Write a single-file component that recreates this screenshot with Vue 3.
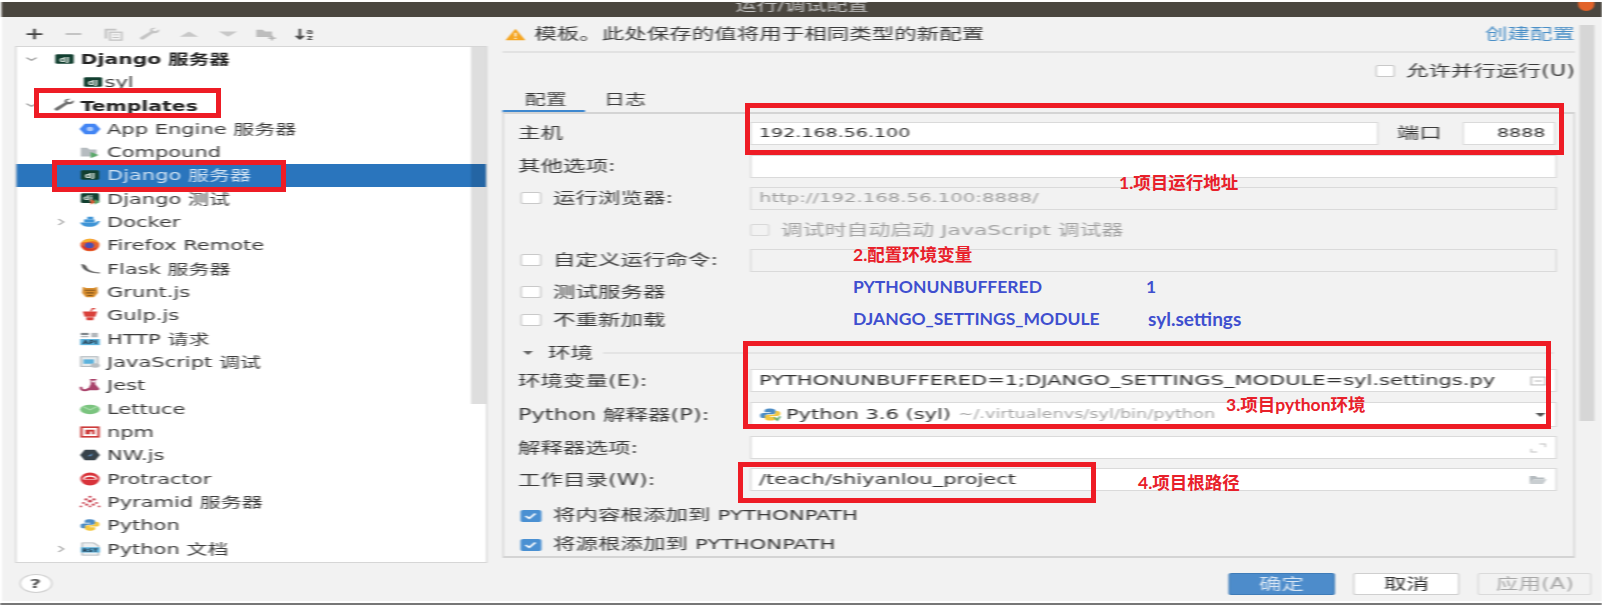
<script setup>
const dj = '<rect x="1" y="2.5" width="14" height="11" rx="1.5" fill="#123f30"/><text x="8" y="11" font-size="7.5" font-weight="700" fill="#e8f0ea" text-anchor="middle" font-family="DejaVu Sans">dj</text>'
const py = '<path d="M8 1.5c-3 0-4 1-4 2.500v1.500h4.200v.8H3C1.500 6.300.8 7.300.8 9s.8 2.800 2.200 2.800h1.300V10c0-1.400 1-2.300 2.300-2.300h3.200c1.200 0 2-.8 2-2V4C11.800 2.500 10.500 1.500 8 1.500z" fill="#4b8bc4"/><path d="M8 14.500c3 0 4-1 4-2.500v-1.500H7.800v-.8H13c1.500 0 2.200-1 2.200-2.700S14.400 4.200 13 4.200h-1.300V6c0 1.400-1 2.300-2.300 2.300H6.200c-1.200 0-2 .8-2 2V12c0 1.500 1.300 2.500 3.800 2.500z" fill="#f4c63d"/>'
const icons = {
  dj,
  djtest: '<rect x="1" y="1.500" width="14" height="11" rx="1.500" fill="#123f30"/><text x="6.500" y="9.500" font-size="7" font-weight="700" fill="#e8f0ea" text-anchor="middle" font-family="DejaVu Sans">dj</text><path d="M8.500 8l4 3.200-4 3.300z" fill="#e0562f"/><path d="M11.500 8l4 3.200-4 3.300z" fill="#59a869"/>',
  wrench: '<path d="M15 2.500l-2.800 2.300-1.900-.6-.4-1.700L12.600 1C10.500.2 8.300 1.300 8 3.300c-.1.700 0 1.300.2 1.800L1 11.500c-.8.700-.8 1.800 0 2.500.7.700 1.700.6 2.300 0l6.900-6.900c2.700.7 5.400-1.300 4.800-4.600z" fill="#6f6f6f"/>',
  appengine: '<path d="M4 2h8l4 6-4 6H4L0 8z" fill="#4285f4"/><circle cx="8" cy="8" r="2.500" fill="#a9c7fa"/>',
  compound: '<path d="M1 3h5l1.500 2H13v8H1z" fill="#b6bcc0"/><path d="M8.500 8l6 3.500-6 3.500z" fill="#59a869"/>',
  docker: '<path d="M.5 8.500h12c.8-1.500 2-1.800 3-1.500-1 3.500-3.500 6.500-8 6.500-3.500 0-6.200-1.800-7-5z" fill="#3e94d6"/><rect x="3.500" y="5" width="8" height="3.500" fill="#3e94d6"/><rect x="6" y="2" width="4.500" height="3" fill="#3e94d6"/>',
  firefox: '<circle cx="8" cy="8" r="7.200" fill="#e8612c"/><path d="M2 5c1-3 4-4.500 7-4 3 .6 5 3 6 6-1-2-2.500-3-5-3.300z" fill="#f7b32b"/><circle cx="7.500" cy="8.500" r="3.500" fill="#4a4fb5"/><path d="M1 8c1 4 4 6.500 8 6 3-.4 5-2.500 5.800-5-2 3-6 4-8.800 2.500C4 10.500 3 9 1 8z" fill="#d8352a"/>',
  flask: '<path d="M2 4c.5 5 5 8.500 13.500 8.500C10 12 6 9 5.500 6.500 5 4 3 2.500 1.500 3z" fill="#555" stroke="#666" stroke-width=".6"/>',
  grunt: '<path d="M2.500 2l2.500 1.500h6L13.500 2l.5 7-3 5H5L2 9z" fill="#d88e2f"/><path d="M4 6h8M5 9h6M6 12h4" stroke="#8a5a1c" stroke-width="1.300"/>',
  gulp: '<path d="M2.500 4h11L12 10H4z" fill="#d9403a"/><path d="M5 10.500h6l-.5 3.500h-5z" fill="#d9403a"/><path d="M8.500 4l1.500-3.500L12 1" stroke="#d9403a" stroke-width="1.200" fill="none"/>',
  http: '<rect x="1" y="1" width="6" height="2.500" fill="#7f868b"/><rect x="9" y="1" width="5" height="5" fill="#b2b7bb"/><rect x="1" y="4.500" width="6" height="1.500" fill="#b2b7bb"/><rect x=".5" y="8" width="15" height="7" fill="#5cb2dc"/><text x="8" y="14" font-size="6" font-weight="700" fill="#234" text-anchor="middle" font-family="DejaVu Sans">API</text>',
  js: '<rect x="1" y="2" width="13" height="11" fill="#e6eaec" stroke="#a9b0b5"/><rect x="3" y="5" width="8" height="5" fill="#5cb2dc"/><ellipse cx="12" cy="12" rx="3.500" ry="2.500" fill="#b9bec2"/>',
  jest: '<path d="M8 1h5v1.500h-1V7l3 5c.3 1-.3 2-1.300 2H6l2.500-7V2.500H8z" fill="#a9436b"/><path d="M1 10c0 2.500 1 4 3 4s3-1 3-2.500" fill="none" stroke="#a9436b" stroke-width="2.200"/><rect x="9.500" y="3" width="2" height="2" fill="#fff"/>',
  lettuce: '<ellipse cx="8" cy="8.500" rx="7.500" ry="5.500" fill="#7bc47f"/><path d="M3 5.500l5 3.500 5-3.500" fill="none" stroke="#a8dcaa" stroke-width="1.300"/>',
  npm: '<rect x="1.500" y="2.500" width="13" height="11" fill="#fff" stroke="#cb3837" stroke-width="1.800"/><path d="M4.500 5.500h7v5H9.500V7.500H8v3H4.500z" fill="#cb3837"/>',
  nw: '<path d="M4 2h8l3.500 6L12 14H4L.5 8z" fill="#37424a"/><path d="M6 9.500L10 6l-1 3.500z" fill="#5d8fc4"/>',
  protractor: '<circle cx="8" cy="8" r="7.300" fill="#d8333a"/><path d="M2.500 8.500h11C13.300 5.500 11 4 8 4s-5.300 1.500-5.500 4.500z" fill="#fff"/><path d="M4 8c.2-1.800 2-2.700 4-2.700s3.800.9 4 2.700z" fill="#d8333a"/>',
  pyramid: '<g fill="#c9414f"><circle cx="8" cy="2" r="1.200"/><circle cx="5" cy="5" r="1.300"/><circle cx="11" cy="5" r="1.300"/><circle cx="8" cy="7" r="1.500"/><circle cx="3" cy="9" r="1.100"/><circle cx="13" cy="9" r="1.100"/><circle cx="1" cy="13" r="1"/><circle cx="15" cy="13" r="1"/><circle cx="5.500" cy="11" r="1.200"/><circle cx="10.500" cy="11" r="1.200"/><circle cx="8" cy="13" r="1"/></g>',
  python: py,
  rst: '<path d="M2 1h9l3.500 3.500V15H2z" fill="#eceff1" stroke="#a9b0b5"/><rect x="1" y="6" width="14.500" height="6" fill="#5cb2dc"/><text x="8" y="11" font-size="5.500" font-weight="700" fill="#234" text-anchor="middle" font-family="DejaVu Sans">RST</text>',
}
const rows = [
  { label: 'Django 服务器', icon: 'dj', level: 'l0', arrow: 'down', bold: true },
  { label: 'syl', icon: 'dj', level: 'ls' },
  { label: 'Templates', icon: 'wrench', level: 'l0', arrow: 'down', bold: true },
  { label: 'App Engine 服务器', icon: 'appengine', level: 'l1' },
  { label: 'Compound', icon: 'compound', level: 'l1' },
  { label: 'Django 服务器', icon: 'dj', level: 'l1', selected: true },
  { label: 'Django 测试', icon: 'djtest', level: 'l1' },
  { label: 'Docker', icon: 'docker', level: 'l1', arrow: 'right' },
  { label: 'Firefox Remote', icon: 'firefox', level: 'l1' },
  { label: 'Flask 服务器', icon: 'flask', level: 'l1' },
  { label: 'Grunt.js', icon: 'grunt', level: 'l1' },
  { label: 'Gulp.js', icon: 'gulp', level: 'l1' },
  { label: 'HTTP 请求', icon: 'http', level: 'l1' },
  { label: 'JavaScript 调试', icon: 'js', level: 'l1' },
  { label: 'Jest', icon: 'jest', level: 'l1' },
  { label: 'Lettuce', icon: 'lettuce', level: 'l1' },
  { label: 'npm', icon: 'npm', level: 'l1' },
  { label: 'NW.js', icon: 'nw', level: 'l1' },
  { label: 'Protractor', icon: 'protractor', level: 'l1' },
  { label: 'Pyramid 服务器', icon: 'pyramid', level: 'l1' },
  { label: 'Python', icon: 'python', level: 'l1' },
  { label: 'Python 文档', icon: 'rst', level: 'l1', arrow: 'right' },
]
const pyIcon = py + '<path d="M11 11l2 3 2-4" fill="none" stroke="#59a869" stroke-width="1.400"/>'
</script>

<template>
  <div class="page">
    <div class="shot">
      <div class="title"><span>运行/调试配置</span><i class="close"></i></div>
      <div class="main">
        <div class="left">
          <div class="toolbar">
            <svg viewBox="0 0 16 16"><path d="M8 2v12M2 8h12" stroke="#444" stroke-width="2"/></svg>
            <svg viewBox="0 0 16 16"><path d="M2 8h12" stroke="#bdbdbd" stroke-width="2"/></svg>
            <svg viewBox="0 0 16 16"><path d="M2 2h9v2H4v9H2z" fill="#c4c4c4"/><rect x="6" y="6" width="9" height="9" fill="none" stroke="#c4c4c4" stroke-width="1.500"/><path d="M8 9h5M8 12h5" stroke="#c4c4c4"/></svg>
            <svg viewBox="0 0 16 16"><path d="M15 2.500l-2.800 2.300-1.900-.6-.4-1.700L12.600 1C10.500.2 8.300 1.300 8 3.300c-.1.700 0 1.300.2 1.800L1 11.500c-.8.700-.8 1.800 0 2.500.7.700 1.700.6 2.300 0l6.900-6.900c2.700.7 5.400-1.300 4.800-4.600z" fill="#c4c4c4"/></svg>
            <svg viewBox="0 0 16 16"><path d="M1 11l7-6 7 6z" fill="#c8c8c8"/></svg>
            <svg viewBox="0 0 16 16"><path d="M1 5l7 6 7-6z" fill="#c8c8c8"/></svg>
            <svg viewBox="0 0 16 16"><path d="M1 3h5l1.500 2H13v6.500H1z" fill="#bdbdbd"/><path d="M13 10v5.500M10 12.800h6" stroke="#b0b0b0" stroke-width="1.400"/></svg>
            <svg viewBox="0 0 16 16"><path d="M4.500 2v11M1.500 10l3 3.500 3-3.500" fill="none" stroke="#444" stroke-width="1.800"/><text x="12" y="7.500" font-size="8" font-weight="700" fill="#555" text-anchor="middle" font-family="DejaVu Sans">a</text><text x="12" y="15" font-size="8" font-weight="700" fill="#555" text-anchor="middle" font-family="DejaVu Sans">z</text></svg>
          </div>
          <div class="tree">
            <div v-for="(r, i) in rows" :key="i" class="row" :class="[r.level, { selected: r.selected, bold: r.bold }]">
              <span class="arrow">
                <svg v-if="r.arrow === 'down'" viewBox="0 0 12 12"><path d="M1 4l5 4 5-4" fill="none" stroke="#888" stroke-width="1.300"/></svg>
                <svg v-else-if="r.arrow === 'right'" viewBox="0 0 12 12"><path d="M3 1.500l5 4.500-5 4.500" fill="none" stroke="#888" stroke-width="1.300"/></svg>
              </span>
              <span class="ico"><svg viewBox="0 0 16 16" v-html="icons[r.icon]"></svg></span>
              <span class="lbl">{{ r.label }}</span>
            </div>
            <i class="treebar"></i>
          </div>
        </div>
        <div class="right">
          <div class="warn">
            <svg class="warnico" viewBox="0 0 16 14"><path d="M8 0l8 14H0z" fill="#f5a623"/><path d="M8 5v4.500M8 11v1.500" stroke="#fff" stroke-width="1.400"/></svg>
            <span class="warntext">模板。此处保存的值将用于相同类型的新配置</span>
            <span class="link">创建配置</span>
          </div>
          <div class="parallel"><i class="cb"></i><span>允许并行运行(U)</span></div>
          <div class="tabs">
            <span class="tab active">配置</span>
            <span class="tab">日志</span>
          </div>
          <div class="panel">
            <div class="frow r33">
              <label class="fl">主机</label>
              <div class="inp host num">192.168.56.100</div>
              <label class="portl">端口</label>
              <div class="inp port num">8888</div>
            </div>
            <div class="frow r33"><label class="fl">其他选项:</label><div class="inp grow"></div></div>
            <div class="frow r31">
              <label class="fl ck"><i class="cb"></i>运行浏览器:</label>
              <div class="inp grow off url">http://192.168.56.100:8888/</div>
            </div>
            <div class="frow r32">
              <span class="fl"></span>
              <span class="dbg"><i class="cb faint"></i>调试时自动启动 JavaScript 调试器</span>
            </div>
            <div class="frow r29">
              <label class="fl ck"><i class="cb"></i>自定义运行命令:</label>
              <div class="inp grow off"></div>
            </div>
            <div class="frow r34"><label class="fl ck"><i class="cb"></i>测试服务器</label></div>
            <div class="frow r22"><label class="fl ck"><i class="cb"></i>不重新加载</label></div>
            <div class="frow section">
              <svg class="tri" viewBox="0 0 12 8"><path d="M1 1h10L6 7z" fill="#666"/></svg>
              <span>环境</span><i class="secline"></i>
            </div>
            <div class="frow r28">
              <label class="fl">环境变量(E):</label>
              <div class="inp grow iconed">
                <span class="val">PYTHONUNBUFFERED=1;DJANGO_SETTINGS_MODULE=syl.settings.py</span>
                <svg class="tail" viewBox="0 0 14 14"><rect x="1" y="2" width="12" height="10" fill="none" stroke="#bbb" stroke-width="1.300"/><path d="M4 7h6" stroke="#bbb" stroke-width="1.300"/></svg>
              </div>
            </div>
            <div class="frow r38 interp">
              <label class="fl">Python 解释器(P):</label>
              <div class="inp grow iconed tall">
                <svg class="pyico" viewBox="0 0 16 16" v-html="pyIcon"></svg>
                <span class="pyname">Python 3.6 (syl)</span>
                <span class="pypath">~/.virtualenvs/syl/bin/python</span>
                <svg class="tail caret" viewBox="0 0 12 8"><path d="M1 1h10L6 7z" fill="#555"/></svg>
              </div>
            </div>
            <div class="frow r30">
              <label class="fl">解释器选项:</label>
              <div class="inp grow iconed">
                <svg class="tail" viewBox="0 0 14 14"><path d="M8 2h5v4M6 12H1V8" fill="none" stroke="#c4c4c4" stroke-width="1.200"/></svg>
              </div>
            </div>
            <div class="frow r34">
              <label class="fl">工作目录(W):</label>
              <div class="inp grow iconed">
                <span class="val">/teach/shiyanlou_project</span>
                <svg class="tail folder" viewBox="0 0 16 12"><path d="M1 1h5l1 2h6v2H4L1 11z" fill="#b5bbbf"/><path d="M4 5h11l-3 6H1z" fill="#c9ced1"/></svg>
              </div>
            </div>
            <div class="frow r38"><label class="ck wide"><i class="cb on"><svg viewBox="0 0 14 12"><path d="M3 6l3 3 5-6" fill="none" stroke="#fff" stroke-width="1.800"/></svg></i><span>将内容根添加到 <span class="lat">PYTHONPATH</span></span></label></div>
            <div class="frow r20"><label class="ck wide"><i class="cb on"><svg viewBox="0 0 14 12"><path d="M3 6l3 3 5-6" fill="none" stroke="#fff" stroke-width="1.800"/></svg></i><span>将源根添加到 <span class="lat">PYTHONPATH</span></span></label></div>
          </div>
        </div>
        <i class="outerbar"></i>
      </div>
      <div class="footer">
        <span class="help">?</span>
        <div class="btns">
          <button class="btn primary">确定</button>
          <button class="btn">取消</button>
          <button class="btn dis">应用(A)</button>
        </div>
      </div>
    </div>

    <div class="notes">
      <i class="box b1"></i><i class="box b2"></i><i class="box b3"></i><i class="box b4"></i><i class="box b5"></i>
      <span class="note red n1">1.项目运行地址</span>
      <span class="note red n2">2.配置环境变量</span>
      <span class="note blue n3">PYTHONUNBUFFERED</span>
      <span class="note blue n4">1</span>
      <span class="note blue n5">DJANGO_SETTINGS_MODULE</span>
      <span class="note blue n6">syl.settings</span>
      <span class="note red n7">3.项目python环境</span>
      <span class="note red n8">4.项目根路径</span>
    </div>
  </div>
</template>

<style>
html, body { margin: 0; background: #fff; overflow: hidden; }
</style>

<style scoped>
.page { position: relative; width: 1602px; height: 605px; overflow: hidden; }
/* The reference is a screenshot stretched sideways by 1.5, so the dialog is laid out at 1068px and scaled. */
.shot {
  width: 1068px; height: 605px; box-sizing: border-box;
  padding: 2px 0 2px 1.33px;
  display: flex; flex-direction: column;
  transform: scaleX(1.5); transform-origin: 0 0;
  filter: blur(0.55px);
  background: linear-gradient(#f2f2f2, #f2f2f2) content-box;
  border-bottom: 2px solid #777;
  font: 14px/1.2 "DejaVu Sans", "Noto Sans CJK SC", sans-serif;
  color: #3c3c3c;
}
.title {
  height: 15px; flex: none; background: #4a463f; color: #c4c4c4; position: relative;
  display: flex; justify-content: center; overflow: hidden; line-height: 7px;
}
.close { position: absolute; right: 5.5px; top: -5px; width: 11px; height: 14px; border-radius: 50%; background: #e2632a; }
.main { height: 546px; flex: none; display: flex; position: relative; }
.left { width: 314.67px; margin-left: 8.67px; flex: none; display: flex; flex-direction: column; }
.toolbar { height: 29px; box-sizing: border-box; padding-top: 5px; flex: none; display: flex; align-items: center; padding-left: 6.5px; gap: 11.67px; }
.toolbar svg { width: 14px; height: 14px; flex: none; }
.tree { position: relative; height: 517px; flex: none; background: #fff; border: 1px solid #d6d6d6; box-sizing: border-box; }
.row { height: 23.33px; display: flex; align-items: center; white-space: nowrap; }
.lbl { padding-top: 1px; }
.row.bold { font-weight: 700; color: #222; font-size: 13.6px; }
.row.selected { background: #2a75bd; color: #cfe2f3; }
.arrow { flex: none; display: flex; align-items: center; }
.arrow svg { width: 8px; height: 12px; }
.ico { flex: none; display: flex; align-items: center; }
.ico svg { width: 14px; height: 14px; }
.l0 { padding-left: 6px; }
.l0 .arrow { width: 19.33px; }
.l0 .ico { width: 17.33px; }
.ls { padding-left: 44px; }
.ls .arrow { width: 0; }
.ls .ico { width: 14.67px; }
.l1 { padding-left: 26px; }
.l1 .arrow { width: 16px; }
.l1 .ico { width: 18.33px; }
.treebar { position: absolute; right: 0; top: 0; width: 10px; height: 357px; background: rgba(0,0,0,.13); }
.right { width: 714.67px; margin-left: 10.67px; flex: none; display: flex; flex-direction: column; }
.warn { height: 36px; box-sizing: border-box; flex: none; display: flex; align-items: center; border-bottom: 2px solid #e2e2e2; font-size: 15px; }
.warnico { width: 13.33px; height: 13px; margin-left: 1.5px; flex: none; }
.warntext { margin-left: 6px; }
.link { margin-left: auto; color: #4a8fc7; }
.parallel { height: 36px; flex: none; display: flex; align-items: center; justify-content: flex-end; gap: 7px; font-size: 15px; }
.tabs { height: 24px; flex: none; display: flex; align-items: center; }
.tab { height: 100%; box-sizing: border-box; padding: 0 12.17px 0 14.5px; display: flex; align-items: center; border-bottom: 3px solid transparent; }
.tab + .tab { padding-left: 12.67px; }
.tab.active { border-bottom-color: #3f88cf; }
.panel { flex: none; height: 446px; box-sizing: border-box; border: 1px solid #d4d4d4; border-width: 2px 1.33px; padding: 2.5px 11px 0 9px; margin-top: -1px; font-size: 15px; }
.frow { display: flex; align-items: center; white-space: nowrap; }
.r20 { height: 20px; } .r22 { height: 22px; } .r28 { height: 28px; } .r29 { height: 29px; }
.r30 { height: 30px; } .r31 { height: 31px; } .r32 { height: 32px; } .r33 { height: 33px; }
.r34 { height: 34px; } .r38 { height: 38px; }
.interp { padding-top: 2px; box-sizing: border-box; }
.fl { width: 154.67px; flex: none; }
.ck { display: flex; align-items: center; gap: 8px; padding-left: 2px; box-sizing: border-box; }
.ck.wide { width: auto; }
.lat { font-size: 14.2px; }
.cb { width: 13.33px; height: 12px; flex: none; box-sizing: border-box; background: #fff; border: 1px solid #c9c9c9; border-radius: 2px; display: block; }
.cb.faint { background: #f2f2f2; border-color: #d8d8d8; }
.cb.on { background: #4a90d2; border-color: #4a90d2; }
.cb.on svg { display: block; width: 100%; height: 100%; }
.dbg { display: flex; align-items: center; gap: 7.3px; color: #a2a2a2; font-size: 14.6px; }
.inp {
  height: 23px; box-sizing: border-box; background: #fff; border: 1.5px solid #dadada; border-width: 1.5px 1px;
  display: flex; align-items: center; padding: 0 5px; color: #333; flex: none; font-size: 14px;
}
.inp.grow { flex: 1; min-width: 0; }
.inp.num { font-size: 12.7px; }
.inp.url { font-size: 13.1px; }
.inp.host { width: 418.67px; }
.inp.port { width: 62.67px; justify-content: flex-end; padding-right: 6px; }
.portl { margin: 0 15.5px 0 12.5px; width: 28px; flex: none; }
.inp.off { background: #f2f2f2; color: #a0a0a0; }
.iconed { position: relative; }
.tall { height: 25px; }
.tail { position: absolute; right: 6px; top: 50%; transform: translateY(-50%); width: 11px; height: 12px; }
.tail.folder { width: 13px; height: 11px; right: 5px; }
.caret { width: 8px; height: 6px; }
.pyico { width: 15px; height: 15px; flex: none; }
.pyname { margin-left: 3px; }
.pypath { margin-left: 5px; color: #a8a8a8; font-size: 11.8px; }
.section { margin-top: 8px; height: 28px; padding-left: 2.5px; }
.tri { width: 8px; height: 6px; flex: none; margin-right: 9.5px; }
.secline { flex: 1; margin-left: 6.5px; height: 2px; background: #e4e4e4; margin-right: 2px; }
.outerbar { position: absolute; top: 8px; left: 1052px; width: 10px; height: 396px; background: #d6d6d6; }
.footer { flex: 1; display: flex; align-items: flex-start; padding-top: 10px; }
.help { margin: 1px 0 0 11.33px; width: 22px; height: 19px; box-sizing: border-box; border: 1px solid #cfcfcf; border-radius: 50%; background: #fff; display: flex; align-items: center; justify-content: center; font-size: 13px; font-weight: 700; color: #555; }
.btns { margin-left: auto; margin-right: 6.67px; display: flex; gap: 12px; }
.btn { width: 71.33px; height: 22px; box-sizing: border-box; padding: 0; border: 1px solid #cfcfcf; border-radius: 2px; background: #fff; color: #333; font: inherit; font-size: 15px; line-height: 1; }
.btn.primary { background: #4d8ccb; border-color: #3f7cb8; color: #d8e6f4; }
.btn.dis { width: 76px; background: #f2f2f2; border-color: #dadada; color: #a8a8a8; }
.notes { position: absolute; inset: 0; pointer-events: none; }
.box { position: absolute; box-sizing: border-box; border: 5px solid #ee1c25; }
.b1 { left: 34px; top: 88px; width: 187px; height: 30px; }
.b2 { left: 52px; top: 160px; width: 234px; height: 32px; }
.b3 { left: 745px; top: 103px; width: 819px; height: 52px; }
.b4 { left: 743px; top: 341px; width: 808px; height: 88px; }
.b5 { left: 738px; top: 462px; width: 358px; height: 41px; }
.note { position: absolute; font: 700 17.5px/20px Lato, "Noto Sans CJK SC", sans-serif; white-space: nowrap; }
.red { color: #e8202a; }
.blue { color: #3f4fcf; }
.n1 { left: 1119px; top: 173px; }
.n2 { left: 853px; top: 245px; }
.n3 { left: 853px; top: 277px; }
.n4 { left: 1146px; top: 277px; }
.n5 { left: 853px; top: 309px; }
.n6 { left: 1148px; top: 309px; font-size: 19px; }
.n7 { left: 1226px; top: 395px; }
.n8 { left: 1138px; top: 473px; }
</style>
